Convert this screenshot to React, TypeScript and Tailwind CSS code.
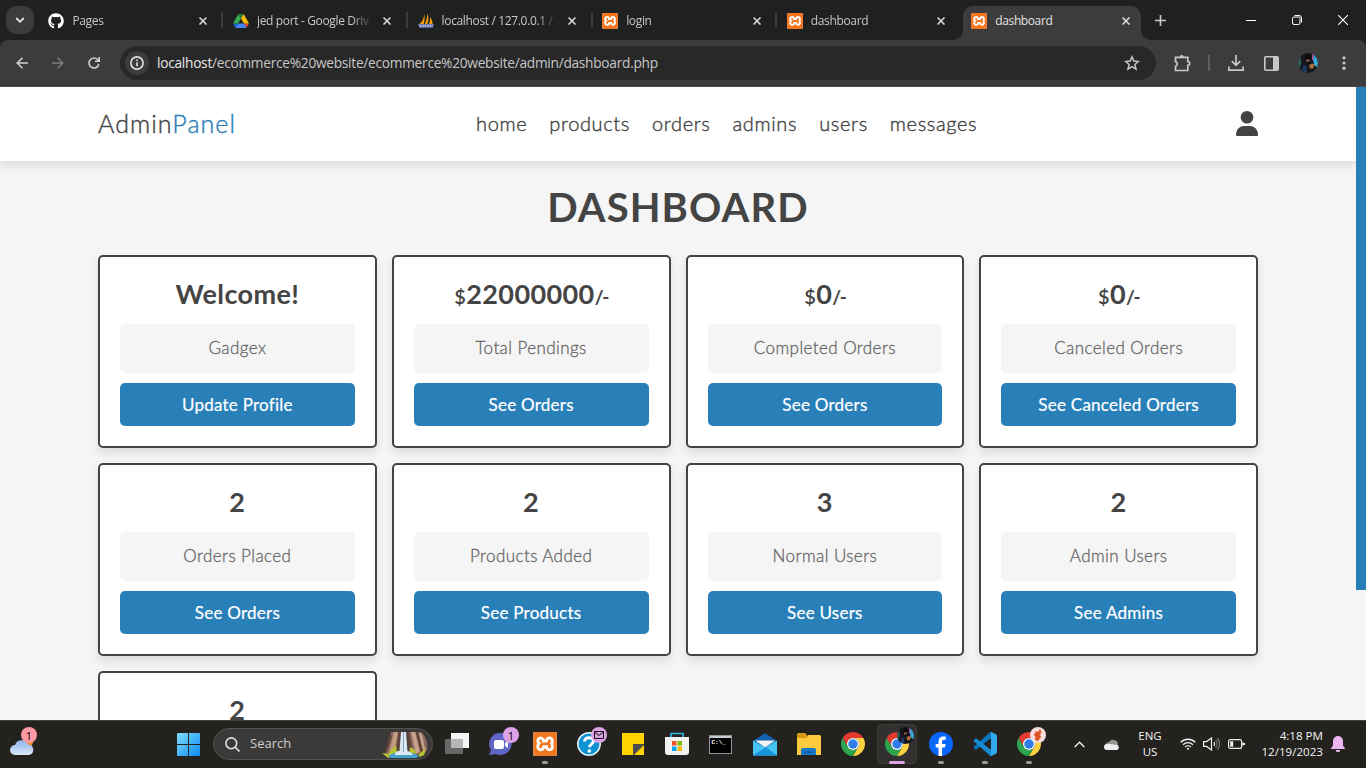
import React from "react";
import { FaGithub } from "react-icons/fa";
import { SiXampp } from "react-icons/si";

const tabs = [
  { title: "Pages", icon: "github" },
  { title: "jed port - Google Driv", icon: "drive" },
  { title: "localhost / 127.0.0.1 /", icon: "pma" },
  { title: "login", icon: "xampp" },
  { title: "dashboard", icon: "xampp" },
  { title: "dashboard", icon: "xampp", active: true },
];

const cards = [
  { head: "Welcome!", label: "Gadgex", button: "Update Profile" },
  { head: "22000000", money: true, label: "Total Pendings", button: "See Orders" },
  { head: "0", money: true, label: "Completed Orders", button: "See Orders" },
  { head: "0", money: true, label: "Canceled Orders", button: "See Canceled Orders" },
  { head: "2", label: "Orders Placed", button: "See Orders" },
  { head: "2", label: "Products Added", button: "See Products" },
  { head: "3", label: "Normal Users", button: "See Users" },
  { head: "2", label: "Admin Users", button: "See Admins" },
];

const nav = ["home", "products", "orders", "admins", "users", "messages"];

function Xampp({ big = false }: { big?: boolean }) {
  return (
    <span className={big ? "block size-6 rounded-[2px] bg-white" : "block size-4 rounded-[2px] bg-white"}>
      <SiXampp className={big ? "block size-6 rounded-[2px] text-[#ee7722]" : "block size-4 rounded-[2px] text-[#f5731b]"} />
    </span>
  );
}

function Drive() {
  return (
    <svg viewBox="0 0 87.3 78" className="block h-[14px] w-4">
      <path fill="#1967d2" d="M6.6 66.85 10.45 73.5c.8 1.4 1.95 2.5 3.3 3.3L27.5 53H0c0 1.55.4 3.1 1.2 4.5z" />
      <path fill="#34a853" d="M43.65 25 29.9 1.2c-1.35.8-2.5 1.9-3.3 3.3L1.2 48.5A9 9 0 0 0 0 53h27.5z" />
      <path fill="#ea4335" d="M73.55 76.8c1.35-.8 2.5-1.9 3.3-3.3l1.6-2.75L86.1 57.5c.8-1.4 1.2-2.95 1.2-4.5H59.8l5.85 11.5z" />
      <path fill="#188038" d="M43.65 25 57.4 1.2C56.05.4 54.5 0 52.9 0H34.4c-1.6 0-3.15.45-4.5 1.2z" />
      <path fill="#4285f4" d="M59.8 53H27.5L13.75 76.8c1.35.8 2.9 1.2 4.5 1.2h50.8c1.6 0 3.15-.45 4.5-1.2z" />
      <path fill="#fbbc04" d="M73.4 26.5 60.7 4.5c-.8-1.4-1.95-2.5-3.3-3.3L43.65 25 59.8 53h27.45c0-1.55-.4-3.1-1.2-4.5z" />
    </svg>
  );
}

function Sails() {
  return (
    <svg viewBox="0 0 16 16" className="block size-4">
      <path fill="#f89c0e" d="M6 1C6.200 5 4.500 9 1 11.500h4.500C7 8 7 4 6 1zM9 .5c1.800 3 2 7 .2 11h-2.700C8.500 8 9.300 4 9 .5zM12 4c1.800 2 2.600 5 2.600 7.500h-4C12 9 12.400 6.500 12 4z" />
      <path fill="#6c78af" d="M0 11h16l-1.500 4H1.500z" />
      <path stroke="#d9dceb" strokeWidth="1.200" strokeDasharray="1.500 1" d="M1.500 12.800h13" />
      <path stroke="#3e4a80" strokeWidth="1.200" strokeDasharray="1 1.500" d="M1 14.500h14" />
    </svg>
  );
}

function TabIcon({ kind }: { kind: string }) {
  if (kind === "github") return <FaGithub className="block size-4 text-white" />;
  if (kind === "drive") return <Drive />;
  if (kind === "pma") return <Sails />;
  return <Xampp />;
}

function TabStrip() {
  return (
    <div className="flex h-10 w-full bg-[#1f2120]">
      <div className="flex w-[40.400px] shrink-0 pl-1.5 pt-1.5">
        <div className="flex h-7 w-7 items-center justify-center rounded-[10px] bg-[#3c3c3c]">
          <svg viewBox="0 0 10 6" className="w-2.5" fill="none" stroke="#e3e3e3" strokeWidth="1.8">
            <path d="m1.200 1 3.800 3.800L8.800 1" />
          </svg>
        </div>
      </div>
      {tabs.map((t, i) => (
        <div key={i} className="flex h-10 w-[184.600px] shrink-0 pt-1.5">
          <div className={t.active ? "relative flex h-[34px] w-[178px] items-center rounded-t-[10px] bg-[#3c3c3c] pb-[5px] pl-2" : "flex h-[34px] w-[178px] items-center pb-[5px] pl-2"}>
            {t.active && (
              <svg viewBox="0 0 198 10" className="absolute -left-[10px] bottom-0 h-[10px] w-[198px]" fill="#3c3c3c">
                <path d="M0 10A10 10 0 0 0 10 0V10zM198 10A10 10 0 0 1 188 0V10z" />
              </svg>
            )}
            <div className="w-4 shrink-0">
              <TabIcon kind={t.icon} />
            </div>
            <div className={t.active ? "ml-2 w-[116px] overflow-hidden whitespace-nowrap text-[12px] leading-4 tracking-[-0.400px] text-[#e3e3e3]" : "ml-2 w-[116px] overflow-hidden whitespace-nowrap text-[12px] leading-4 tracking-[-0.350px] text-[#c7c7c7] [mask-image:linear-gradient(to_right,#000_94px,transparent_116px)]"}>
              {t.title}
            </div>
            <svg viewBox="0 0 8 8" className="ml-[10.500px] size-2 shrink-0" stroke="#e0e0e0" strokeWidth="1.500">
              <path d="m.5.5 7 7M7.500.5l-7 7" />
            </svg>
          </div>
          {i < 4 && <div className="ml-[3px] mt-1.5 h-4 w-0.5 bg-[#3c3c3c]" />}
        </div>
      ))}
      <div className="flex flex-1 items-center justify-between pl-[7px] pr-[18px]">
        <svg viewBox="0 0 10 10" className="size-[11px]" stroke="#c7c7c7" strokeWidth="1.500">
          <path d="M5 0v10M0 5h10" />
        </svg>
        <div className="flex items-center gap-[36px]">
          <div className="h-px w-[10px] bg-white" />
          <svg viewBox="0 0 10 10" className="size-[10px]" fill="none" stroke="#fff" strokeWidth="1">
            <rect x=".5" y="2" width="7.500" height="7.500" rx="1.500" />
            <path d="M2.500.5H7A2.500 2.500 0 0 1 9.500 3v4.500" />
          </svg>
          <svg viewBox="0 0 10 10" className="size-[10px]" stroke="#fff" strokeWidth="1.100">
            <path d="m0 0 10 10M10 0 0 10" />
          </svg>
        </div>
      </div>
    </div>
  );
}

function Avatar({ className }: { className: string }) {
  return (
    <svg viewBox="0 0 20 20" className={className}>
      <defs>
        <clipPath id="avatarClip">
          <circle cx="10" cy="10" r="10" />
        </clipPath>
      </defs>
      <g clipPath="url(#avatarClip)">
        <path fill="#15171c" d="M0 0h20v20H0z" />
        <path fill="#315f58" d="M0 4h2.500l1 6-2 5H0z" />
        <path fill="#36a8d6" d="M16 0h4v15l-4-3-1-6z" />
        <path fill="#b04f9c" d="M14 0h1.500v7H14z" />
        <path fill="#83604f" d="M8 6h4l-.5 3.500h-3z" />
        <path fill="#203a68" d="M5 13l3-1 1 8H4z" />
        <path fill="#ad6c42" d="m11 12 3-1.500 3 1-2 4h-3z" />
        <path fill="#0b0c10" d="M7 3c1-2 5-2 6 1v2.500H7zM9.500 8.500h3V11h-3z" />
      </g>
    </svg>
  );
}

function Toolbar() {
  return (
    <div className="w-full bg-[#1f2120]">
      <div className="flex h-[47px] w-full items-center rounded-t-[8px] border-b border-[#4a4a4a] bg-[#3c3c3c]">
        <div className="flex w-[120px] items-center gap-6 pl-4">
          <svg viewBox="0 0 12 12" className="size-3" fill="none" stroke="#d0d0d0" strokeWidth="1.600">
            <path d="M12 6H1.200M6.500.7 1.200 6l5.300 5.300" />
          </svg>
          <svg viewBox="0 0 12 12" className="size-3" fill="none" stroke="#7d7d7d" strokeWidth="1.600">
            <path d="M0 6h10.800M5.500.7 10.800 6l-5.300 5.300" />
          </svg>
          <svg viewBox="0 0 12 12" className="size-3" fill="none" stroke="#d0d0d0" strokeWidth="1.600">
            <path d="M10.900 7A5 5 0 1 1 9.800 2.700l1.300 1.200M11.200 0v4.200H7" />
          </svg>
        </div>
        <div className="flex h-[34px] w-[1036px] items-center rounded-full bg-[#282828] pl-[5px] pr-4">
          <div className="flex size-6 items-center justify-center rounded-full bg-[#3c3c3c]">
            <svg viewBox="0 0 14 14" className="size-[14px]" fill="none" stroke="#e3e3e3" strokeWidth="1.600">
              <circle cx="7" cy="7" r="6.100" />
              <path d="M7 6.300v4M7 3.600v1.500" />
            </svg>
          </div>
          <div className="ml-2 flex-1 whitespace-nowrap text-[13.700px] leading-5 tracking-[-0.260px] text-[#c7c7c7]">
            <span className="text-[#e8e8e8]">localhost</span>/ecommerce%20website/ecommerce%20website/admin/dashboard.php
          </div>
          <svg viewBox="0 0 16 16" className="size-4" fill="none" stroke="#c7c7c7" strokeWidth="1.500">
            <path d="m8 1.800 1.800 4.300 4.600.4-3.500 3 1.100 4.600L8 11.700l-4 2.400 1.100-4.600-3.500-3 4.600-.4z" />
          </svg>
        </div>
        <div className="flex flex-1 items-center pl-[18px] text-[#c7c7c7]">
          <svg viewBox="0 0 17 17" className="size-[17px]" fill="none" stroke="currentColor" strokeWidth="1.700">
            <path d="M1.500 2.300h12.300v4.200c2.600 0 2.600 3.800 0 3.800v5.200H1.500v-4.200c2.400-.4 2.400-4.200 0-4.600z" />
            <path fill="currentColor" stroke="none" d="M5.700 2a2 2 0 0 1 4 0z" />
          </svg>
          <div className="ml-[17px] h-4 w-0.5 bg-[#5f5f5f]" />
          <svg viewBox="0 0 16 16" className="ml-[18px] size-4" fill="none" stroke="currentColor" strokeWidth="1.700">
            <path d="M8 0v10M3.800 6.200 8 10.400l4.200-4.200M.9 11.500v3.600h14.200v-3.600" />
          </svg>
          <svg viewBox="0 0 15 15" className="ml-[20px] size-[15px]" fill="none" stroke="currentColor" strokeWidth="1.600">
            <rect x=".8" y=".8" width="13.400" height="13.400" rx="1" />
            <path fill="currentColor" stroke="none" d="M9 1h5v13H9z" />
          </svg>
          <Avatar className="ml-[19px] size-5" />
          <svg viewBox="0 0 4 14" className="ml-[24px] h-[14px] w-1" fill="currentColor">
            <circle cx="2" cy="1.800" r="1.600" />
            <circle cx="2" cy="7" r="1.600" />
            <circle cx="2" cy="12.200" r="1.600" />
          </svg>
        </div>
      </div>
    </div>
  );
}

function Page() {
  return (
    <div className="flex h-[633px] w-full overflow-hidden bg-[#f5f5f5] font-['Lato',sans-serif] text-[#444]">
      <div className="h-full w-[1356px] overflow-hidden">
        <header className="relative z-10 h-[74px] bg-white shadow-[0_5px_10px_rgba(0,0,0,0.1)]">
          <div className="mx-auto flex h-full w-[1160px] items-center">
            <div className="w-[378px] whitespace-nowrap pb-px text-[25px] font-light tracking-[1.050px] [-webkit-text-stroke:0.400px]">
              Admin<span className="text-[#2980b9]">Panel</span>
            </div>
            <nav className="flex flex-1 gap-[22px] pb-[2px] text-[20px] font-light tracking-[0.650px] [-webkit-text-stroke:0.400px]">
              {nav.map((n) => (
                <a key={n}>{n}</a>
              ))}
            </nav>
            <svg viewBox="0 0 22 25" className="mb-[2px] h-[25px] w-[22px]" fill="#444">
              <circle cx="11" cy="6.300" r="6.300" />
              <path d="M0 24c0-5.500 3.500-9 8-9h6c4.500 0 8 3.500 8 9a1 1 0 0 1-1 1H1a1 1 0 0 1-1-1z" />
            </svg>
          </div>
        </header>
        <main className="mx-auto w-[1160px] pt-5">
          <h1 className="h-[54px] text-center text-[40px] font-bold leading-[52px] tracking-[1.100px]">DASHBOARD</h1>
          <div className="mt-5 grid grid-cols-4 gap-[15px]">
            {cards.map((c, i) => (
              <section key={i} className="h-[193px] rounded-[5px] border-2 border-[#444] bg-white p-5 text-center shadow-[0_5px_10px_rgba(0,0,0,0.1)]">
                <h3 className="h-[37px] text-[27px] font-bold leading-[34px] tracking-[0.400px]">
                  {c.money && <span className="text-[20px] font-semibold">$</span>}
                  {c.head}
                  {c.money && <span className="text-[19px] tracking-[-1.300px]">/-</span>}
                </h3>
                <p className="mt-[10px] h-[49px] rounded-[5px] bg-[#f5f5f5] text-[17px] font-light leading-[48px] tracking-[0.420px] text-[#666] [-webkit-text-stroke:0.300px]">{c.label}</p>
                <a className="mt-[10px] block h-[43px] rounded-[5px] bg-[#2980b9] text-[17px] leading-[43px] tracking-[0.250px] text-white [-webkit-text-stroke:0.200px]">{c.button}</a>
              </section>
            ))}
            <section className="h-[49px] rounded-t-[5px] border-2 border-b-0 border-[#444] bg-white px-5 pt-5 text-center">
              <h3 className="text-[27px] font-bold leading-[34px] tracking-[0.400px]">2</h3>
            </section>
          </div>
        </main>
      </div>
      <div className="h-[503px] w-[10px] bg-[#2980b9]" />
    </div>
  );
}

function Chrome() {
  return (
    <svg viewBox="2 2 44 44" className="size-6">
      <path fill="#e33b2e" d="M24 13h19.050A22 22 0 0 0 4.950 13l9.520 16.500A11 11 0 0 1 24 13z" />
      <path fill="#ffd23f" d="M43.050 13A22 22 0 0 1 24 46l9.530-16.500A11 11 0 0 0 24 13z" />
      <path fill="#2da44e" d="M24 46A22 22 0 0 1 4.950 13l9.520 16.500a11 11 0 0 0 19.060 0z" />
      <circle cx="24" cy="24" r="11" fill="#fff" />
      <circle cx="24" cy="24" r="8.700" fill="#2f7de9" />
    </svg>
  );
}

function Slot({ children, run, active }: { children: React.ReactNode; run?: boolean; active?: boolean }) {
  return (
    <div className="flex h-full w-11 shrink-0 justify-center pt-[3px]">
      <div className={active ? "relative flex h-10 w-10 items-center justify-center rounded-[4px] border border-[#3c3a38] bg-[#33312f]" : "relative flex h-10 w-10 items-center justify-center"}>
        {children}
        {run && <div className="absolute bottom-0 left-[17px] h-[3px] w-1.5 rounded-full bg-[#9a9a9a]" />}
        {active && <div className="absolute -bottom-px left-[11px] h-[3px] w-4 rounded-full bg-[#dda2e6]" />}
      </div>
    </div>
  );
}

function Weather() {
  return (
    <div className="relative ml-[9px] mt-[17px] h-[18px] w-[26px]">
      <svg viewBox="0 0 26 18" className="h-[18px] w-[26px]">
        <defs>
          <linearGradient id="cloud" x2="0" y2="1">
            <stop stopColor="#8db4ec" />
            <stop offset="1" stopColor="#dce8fb" />
          </linearGradient>
        </defs>
        <circle cx="19" cy="4" r="5" fill="#f08a24" />
        <path fill="url(#cloud)" d="M6 17a5 5 0 0 1 0-10 7 7 0 0 1 13-.500A5.300 5.300 0 0 1 20 17z" />
      </svg>
      <div className="absolute -top-[11px] left-[12px] flex size-4 items-center justify-center rounded-full bg-[#ff99a4] text-[11px] leading-none text-black">1</div>
    </div>
  );
}

function Falls() {
  return (
    <svg viewBox="0 0 48 27" className="h-[27px] w-12">
      <path fill="#8e6a5c" d="M10 1h11l-5 23H4z" />
      <path fill="#c19b80" d="m13 1 5 0-6 22-4-1z" />
      <path fill="#5f433c" d="m17 1 4 0-3 21-3 1zM9 3l2 2-5 16-2 1z" />
      <path fill="#8b685c" d="M26 1h14c5 4 7 11 6 18l-4 6-14-3z" />
      <path fill="#c6a38a" d="m30 1 4 0 5 20-4 2zM38 2l3 1 3 15-2 2z" />
      <path fill="#5c403a" d="m25 1 3 0 4 21-4 0zM35 1l2 0 5 20-2 2z" />
      <path fill="#b8c52f" d="M1 22l6 1 8-9 1 9-9 4zM29 16l5 3 1 7-7-1zM38 23l7-6-2 7-5 2z" />
      <path fill="#47a2c9" d="M7 25c9-6 22-6 31 0l-3 2H10z" />
      <path fill="#dce9f4" d="M20 1h5l1.500 19c4 1 5 3 5 4H14c0-2 1-4 4.500-4z" />
      <path fill="#8ea4be" d="m22 1 1 0 0 20h-1z" />
    </svg>
  );
}

function Taskbar() {
  return (
    <div className="flex h-12 w-full border-t border-[#454443] bg-[#24221f]">
      <div className="w-[166px] shrink-0">
        <Weather />
      </div>
      <Slot>
        <svg viewBox="0 0 23 23" className="size-[23px]">
          <defs>
            <linearGradient id="win" x2="1" y2="1">
              <stop stopColor="#7fdcff" />
              <stop offset="1" stopColor="#0a8cf5" />
            </linearGradient>
          </defs>
          <path fill="url(#win)" d="M0 1a1 1 0 0 1 1-1h10v11H0zM12 0h10a1 1 0 0 1 1 1v10H12zM0 12h11v11H1a1 1 0 0 1-1-1zM12 12h11v10a1 1 0 0 1-1 1H12z" />
        </svg>
      </Slot>
      <div className="ml-[3px] mt-[7px] flex h-8 w-[220px] shrink-0 items-center rounded-full border border-[#535250] bg-[#3b3a39] pl-[11px] pr-[3px]">
        <svg viewBox="0 0 15 15" className="size-[15px]" fill="none" stroke="#e0e0e0" strokeWidth="1.600">
          <circle cx="6.300" cy="6.300" r="5.400" />
          <path d="m10.200 10.200 4.300 4.300" />
        </svg>
        <span className="ml-[10px] flex-1 text-[13px] text-[#cfcfcf]">Search</span>
        <Falls />
      </div>
      <div className="w-0.5 shrink-0" />
      <Slot>
        <svg viewBox="0 0 24 22" className="h-[22px] w-6">
          <path fill="#f4f4f4" d="M6 0h18v15H6z" />
          <path fill="#686868" d="M0 6h18v15H0z" />
          <path fill="#b5b5b5" d="M6 6h12v9H6z" />
        </svg>
      </Slot>
      <Slot>
        <svg viewBox="0 0 24 24" className="size-6">
          <path fill="#6065c8" d="M12 1a11 11 0 1 1-5 21L0 23l2-5A11 11 0 0 1 12 1z" />
          <rect x="5" y="8" width="10" height="9" rx="2" fill="#fff" />
          <path fill="#fff" d="m16 11 3-2v7l-3-2z" />
        </svg>
        <div className="absolute top-[3px] right-[2px] flex size-4 items-center justify-center rounded-full bg-[#dda2e6] text-[11px] leading-none text-black">1</div>
      </Slot>
      <Slot run>
        <Xampp big />
      </Slot>
      <Slot>
        <svg viewBox="0 0 24 24" className="size-6">
          <circle cx="12" cy="12" r="11.200" fill="#0c93d4" stroke="#e8f5fb" strokeWidth="1.500" />
          <path d="M7.500 9.500c0-5 9-5 9-.5 0 3-4 3.200-4 6.200" fill="none" stroke="#fff" strokeWidth="3" />
          <circle cx="12.300" cy="19" r="1.800" fill="#fff" />
        </svg>
        <div className="absolute top-[3px] right-[2px] flex size-4 items-center justify-center rounded-full bg-[#dda2e6]">
          <svg viewBox="0 0 10 8" className="h-2 w-2.5" fill="none" stroke="#111">
            <path d="M.5.500h9v7h-9zM.5 1 5 4.500 9.500 1" />
          </svg>
        </div>
      </Slot>
      <Slot>
        <svg viewBox="0 0 22 22" className="size-[22px]">
          <path fill="#ffd400" d="M0 0h22v22H0z" />
          <path fill="#282b2c" d="M11 11h11L11 22z" />
          <path fill="#4b4c4b" d="M11 11h11v1L12 22h-1z" />
        </svg>
      </Slot>
      <Slot>
        <svg viewBox="0 0 24 24" className="size-6">
          <path fill="none" stroke="#30b4e6" strokeWidth="1.700" d="M6 6V1.500h12V6" />
          <path fill="#f1f1f1" d="M0 5h24v15a3 3 0 0 1-3 3H3a3 3 0 0 1-3-3z" />
          <path fill="#f25022" d="M7 9h4.500v4.500H7z" />
          <path fill="#7fba00" d="M12.500 9H17v4.500h-4.500z" />
          <path fill="#00a4ef" d="M7 14.500h4.500V19H7z" />
          <path fill="#ffb900" d="M12.500 14.500H17V19h-4.500z" />
        </svg>
      </Slot>
      <Slot>
        <div className="mr-[2px] h-[19px] w-[23px] border border-[#8f9396] bg-black">
          <div className="h-0.5 bg-[#c7cbd2]" />
          <div className="pl-[2px] pt-[2px] font-['Liberation_Mono',monospace] text-[6px] font-bold leading-[6px] text-white">C:\_</div>
        </div>
      </Slot>
      <Slot>
        <svg viewBox="0 0 24 23" className="h-[23px] w-6">
          <path fill="#1260ae" d="M0 8 12 0l12 8v7H0z" />
          <path fill="#f3f3f3" d="M2 7.500h20l-10 7z" />
          <path fill="#46c5f3" d="M24 7.500V22.500H0V7.500l12 7z" />
          <path fill="#1794dc" d="M24 22.500H0l13-8.500z" />
        </svg>
      </Slot>
      <Slot>
        <svg viewBox="0 0 24 22" className="h-[22px] w-6">
          <path fill="#d89a13" d="M0 1.500A1.500 1.500 0 0 1 1.500 0H8l2.500 2.500V8H0z" />
          <path fill="#fcca3e" d="M0 5h9l2.500-3H22.500A1.500 1.500 0 0 1 24 3.500V22H0z" />
          <path fill="#1778c5" d="M4 22v-5a2 2 0 0 1 2-2h11a2 2 0 0 1 2 2v5z" />
          <path fill="#0e5b9d" d="M7 18.500h9V20H7z" />
        </svg>
      </Slot>
      <Slot>
        <Chrome />
      </Slot>
      <Slot active>
        <Chrome />
        <Avatar className="absolute right-[2px] top-[2px] size-[17px]" />
      </Slot>
      <Slot run>
        <svg viewBox="0 0 24 24" className="size-6">
          <circle cx="12" cy="12" r="12" fill="#0866ff" />
          <path fill="#fff" d="M9.500 24v-8.500H6.700V12h2.800v-2c0-4 2-5.600 5-5.600.9 0 1.700.1 2.200.2v3.200h-1.500c-1.700 0-2.100.8-2.100 2.300V12h3.500l-.6 3.500h-2.900V24z" />
        </svg>
      </Slot>
      <Slot run>
        <svg viewBox="0 0 24 24" className="size-6">
          <path fill="#0b76bd" d="m.3 15.300 2 1.900c.4.300.9.300 1.300 0L18 6.200V0h-.7L.3 15.300z" />
          <path fill="#168bd1" d="m.3 8.700 2-1.900c.4-.3.900-.300 1.300 0L18 17.800V24h-.7L.3 8.700z" />
          <path fill="#32a9ef" d="M17.300 24c.8.100 1.200 0 1.700-.3l4-2c.6-.3 1-.9 1-1.500V3.800c0-.6-.4-1.200-1-1.500L19 .3C18.500 0 18 0 17.300 0c.4 0 .7.400.7 1v22c0 .6-.3 1-.7 1z" />
        </svg>
      </Slot>
      <Slot run>
        <Chrome />
        <svg viewBox="0 0 16 16" className="absolute right-[3px] top-[3px] size-4">
          <circle cx="8" cy="8" r="8" fill="#f5dcda" />
          <path fill="#dd5426" d="m6 4 2 1 2-3 1.500 3-1.500 3 1 2-3 4-3-1 .5-3-1.500-2z" />
        </svg>
      </Slot>
      <div className="flex flex-1 items-center pb-px text-[#f2f2f2]">
        <svg viewBox="0 0 11 7" className="ml-[23px] h-[7px] w-[11px] shrink-0" fill="none" stroke="#eee" strokeWidth="1.400">
          <path d="m.7 6 4.800-4.800L10.300 6" />
        </svg>
        <svg viewBox="0 0 16 11" className="ml-[19px] h-[11px] w-4 shrink-0">
          <path fill="#969696" d="M2 6a3 3 0 0 1 3-3 5 5 0 0 1 9 2v3H2z" />
          <path fill="#eee" d="M3 11a3 3 0 0 1 0-6h3l7 1a2.600 2.600 0 0 1 0 5z" />
        </svg>
        <div className="ml-[14px] w-[32px] shrink-0 text-center text-[11.500px] leading-4">
          ENG
          <br />
          US
        </div>
        <svg viewBox="0 0 16 12" className="ml-[14px] h-3 w-4 shrink-0" fill="none" stroke="#eee" strokeWidth="1.300">
          <path d="M.7 4.300a10.300 10.300 0 0 1 14.600 0M3 6.700a7 7 0 0 1 10 0M5.200 9a4 4 0 0 1 5.600 0" />
          <circle cx="8" cy="10.700" r="1" fill="#eee" stroke="none" />
        </svg>
        <svg viewBox="0 0 17 14" className="ml-[7px] h-[14px] w-[17px] shrink-0" fill="none" stroke="#eee" strokeWidth="1.200">
          <path d="M.6 4.600h3L8.500 1v12L3.600 9.400h-3z" />
          <path d="M11 5a4 4 0 0 1 0 4" />
          <path stroke="#777" d="M12.600 3a6 6 0 0 1 0 8M14.300 1.300a8 8 0 0 1 0 11.400" />
        </svg>
        <svg viewBox="0 0 17 10" className="ml-[8px] h-[10px] w-[17px] shrink-0" fill="none" stroke="#eee" strokeWidth="1.200">
          <rect x=".6" y=".6" width="13" height="8.800" rx="2" />
          <path fill="#eee" stroke="none" d="M2.200 2.200h3v5.600h-3zM14.300 3.500 17 4v2l-2.700.5z" />
        </svg>
        <div className="flex-1 whitespace-nowrap text-right text-[11.600px] leading-4">
          4:18 PM
          <br />
          12/19/2023
        </div>
        <svg viewBox="0 0 14 16" className="ml-[8px] mr-[21px] h-4 w-[14px] shrink-0" fill="#eab5f0">
          <path d="M7 0a5 5 0 0 1 5 5v4.500l2 3V13H0v-.5l2-3V5a5 5 0 0 1 5-5zM4.800 14h4.400a2.200 2.200 0 0 1-4.400 0z" />
        </svg>
      </div>
    </div>
  );
}

export default function App() {
  return (
    <div className="flex h-[768px] w-[1366px] flex-col overflow-hidden font-['Open_Sans','Noto_Sans',sans-serif]">
      <TabStrip />
      <Toolbar />
      <Page />
      <Taskbar />
    </div>
  );
}
